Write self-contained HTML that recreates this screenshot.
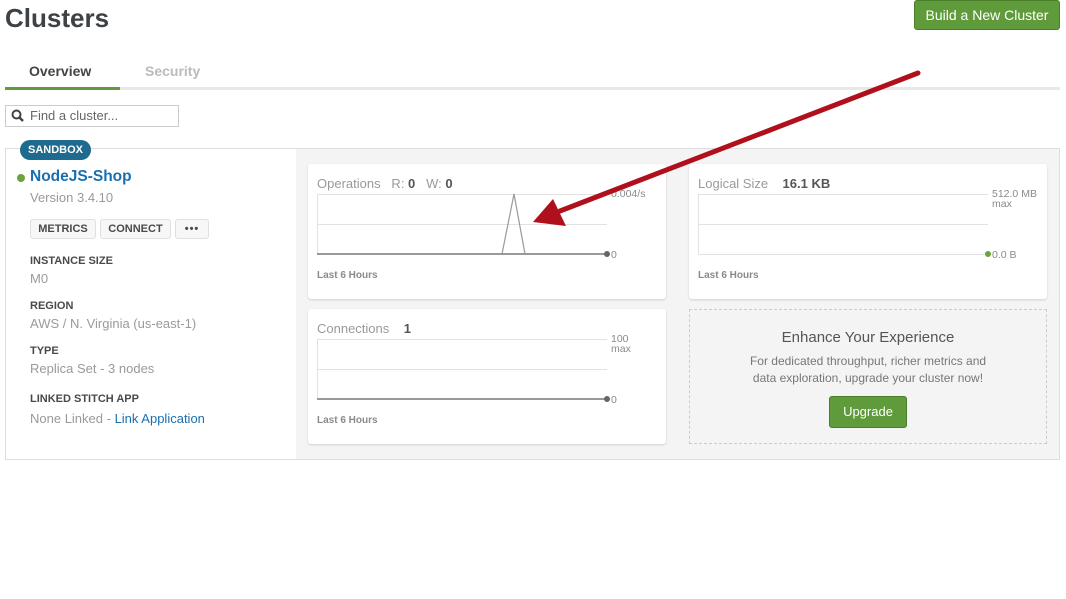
<!DOCTYPE html>
<html><head><meta charset="utf-8"><style>
body{margin:0;width:1066px;height:599px;background:#fff;font-family:"Liberation Sans",sans-serif;position:relative;overflow:hidden;color:#444}
.a{position:absolute}
h1{position:absolute;left:5px;top:3px;margin:0;font-size:26px;font-weight:bold;color:#3d4246}
.btn{position:absolute;left:914px;top:0;width:146px;height:30px;background:#5f9b3a;border:1px solid #4a7f2a;border-radius:3px;color:#fff;font-size:14px;line-height:29px;text-align:center;box-sizing:border-box}
.lbl{font-size:11px;font-weight:bold;color:#494949}
.val{font-size:13px;color:#9a9a9a}
.sb{background:#f7f7f7;border:1px solid #e0e0e0;border-radius:3px;font-size:11px;font-weight:bold;color:#494949;height:20px;line-height:19px;text-align:center;box-sizing:border-box}
.card{position:absolute;background:#fff;border-radius:3px;box-shadow:0 1px 2px rgba(0,0,0,.15);width:358px;height:135px}
.t{font-size:13px;color:#9a9a9a}
.ln{position:absolute;height:1px;background:#e2e2e2}
.sm{font-size:10.5px;color:#8a8a8a;line-height:10px}
.foot{position:absolute;left:9px;top:106px;font-size:10px;font-weight:bold;color:#8a8a8a}
</style></head><body>
<h1>Clusters</h1>
<div class="btn">Build a New Cluster</div>
<div class="a" style="left:29px;top:63px;font-size:14px;font-weight:bold;color:#444">Overview</div>
<div class="a" style="left:145px;top:63px;font-size:14px;font-weight:bold;color:#bbb">Security</div>
<div class="a" style="left:5px;top:87px;width:1055px;height:3px;background:#e8e8e8"></div>
<div class="a" style="left:5px;top:87px;width:115px;height:3px;background:#5f9b3a"></div>
<div class="a" style="left:5px;top:105px;width:174px;height:22px;border:1px solid #ccc;box-sizing:border-box"></div>
<svg class="a" style="left:11px;top:109px" width="14" height="14"><circle cx="5.5" cy="5.5" r="4" fill="none" stroke="#444" stroke-width="2"/><path d="M8.5 8.5L12 12" stroke="#444" stroke-width="2.5"/></svg>
<div class="a" style="left:30px;top:108px;font-size:13px;color:#666">Find a cluster...</div>

<div class="a" style="left:5px;top:148px;width:1055px;height:312px;border:1px solid #ddd;box-sizing:border-box;background:#f4f4f4"></div>
<div class="a" style="left:6px;top:149px;width:290px;height:310px;background:#fff"></div>
<div class="a" style="left:20px;top:140px;width:71px;height:20px;border-radius:10px;background:#1e6b8f;color:#fff;font-size:11px;font-weight:bold;text-align:center;line-height:20px">SANDBOX</div>
<div class="a" style="left:17px;top:174px;width:8px;height:8px;border-radius:50%;background:#6ba43a"></div>
<div class="a" style="left:30px;top:168px;font-size:15.5px;font-weight:bold;color:#1a6fae">NodeJS-Shop</div>
<div class="a val" style="left:30px;top:190px">Version 3.4.10</div>
<div class="a sb" style="left:30px;top:219px;width:66px">METRICS</div>
<div class="a sb" style="left:100px;top:219px;width:71px">CONNECT</div>
<div class="a sb" style="left:175px;top:219px;width:34px;letter-spacing:1px">•••</div>
<div class="a lbl" style="left:30px;top:255px">INSTANCE SIZE</div><div class="a val" style="left:30px;top:271px">M0</div>
<div class="a lbl" style="left:30px;top:300px">REGION</div><div class="a val" style="left:30px;top:316px">AWS / N. Virginia (us-east-1)</div>
<div class="a lbl" style="left:30px;top:345px">TYPE</div><div class="a val" style="left:30px;top:361px">Replica Set - 3 nodes</div>
<div class="a lbl" style="left:30px;top:393px">LINKED STITCH APP</div><div class="a val" style="left:30px;top:411px">None Linked - <span style="color:#1a6fae">Link Application</span></div>

<div class="card" style="left:308px;top:164px">
<div class="a t" style="left:9px;top:12px">Operations &nbsp; R: <b style="color:#555">0</b> &nbsp; W: <b style="color:#555">0</b></div>
<div class="ln" style="left:9px;top:30px;width:290px"></div><div class="ln" style="left:9px;top:60px;width:290px"></div>
<div class="a" style="left:9px;top:30px;width:1px;height:60px;background:#e2e2e2"></div>
<div class="a" style="left:9px;top:89px;width:290px;height:2px;background:#999"></div>
<svg class="a" style="left:0;top:0" width="358" height="135"><path d="M194 90L206 30L217 90" fill="none" stroke="#999" stroke-width="1.2"/></svg>
<div class="a" style="left:296px;top:87px;width:6px;height:6px;border-radius:50%;background:#666"></div>
<div class="a sm" style="left:303px;top:25px">0.004/s</div>
<div class="a sm" style="left:303px;top:86px">0</div>
<div class="foot">Last 6 Hours</div></div>

<div class="card" style="left:308px;top:309px">
<div class="a t" style="left:9px;top:12px">Connections &nbsp; &nbsp;<b style="color:#555">1</b></div>
<div class="ln" style="left:9px;top:30px;width:290px"></div><div class="ln" style="left:9px;top:60px;width:290px"></div>
<div class="a" style="left:9px;top:30px;width:1px;height:60px;background:#e2e2e2"></div>
<div class="a" style="left:9px;top:89px;width:290px;height:2px;background:#999"></div>
<div class="a" style="left:296px;top:87px;width:6px;height:6px;border-radius:50%;background:#666"></div>
<div class="a sm" style="left:303px;top:25px">100<br>max</div>
<div class="a sm" style="left:303px;top:86px">0</div>
<div class="foot">Last 6 Hours</div></div>

<div class="card" style="left:689px;top:164px">
<div class="a t" style="left:9px;top:12px">Logical Size &nbsp; &nbsp;<b style="color:#555">16.1 KB</b></div>
<div class="ln" style="left:9px;top:30px;width:290px"></div><div class="ln" style="left:9px;top:60px;width:290px"></div><div class="ln" style="left:9px;top:90px;width:290px"></div>
<div class="a" style="left:9px;top:30px;width:1px;height:60px;background:#e2e2e2"></div>
<div class="a" style="left:296px;top:87px;width:6px;height:6px;border-radius:50%;background:#6ba43a"></div>
<div class="a sm" style="left:303px;top:25px">512.0 MB<br>max</div>
<div class="a sm" style="left:303px;top:86px">0.0 B</div>
<div class="foot">Last 6 Hours</div></div>

<div class="a" style="left:689px;top:309px;width:358px;height:135px;border:1px dashed #ccc;box-sizing:border-box;text-align:center">
<div style="margin-top:19px;font-size:15px;color:#555">Enhance Your Experience</div>
<div style="margin-top:7px;font-size:12px;color:#777;line-height:17px">For dedicated throughput, richer metrics and<br>data exploration, upgrade your cluster now!</div>
<div style="margin:9px auto 0;width:78px;height:32px;background:#5f9b3a;border:1px solid #4a7f2a;border-radius:3px;box-sizing:border-box;color:#fff;font-size:13px;line-height:30px">Upgrade</div></div>

<svg class="a" style="left:0;top:0" width="1066" height="599"><path d="M918 73L560 211" stroke="#b0101c" stroke-width="5" stroke-linecap="round"/><path d="M533 222L553 199L566 226Z" fill="#b0101c"/></svg>
</body></html>
